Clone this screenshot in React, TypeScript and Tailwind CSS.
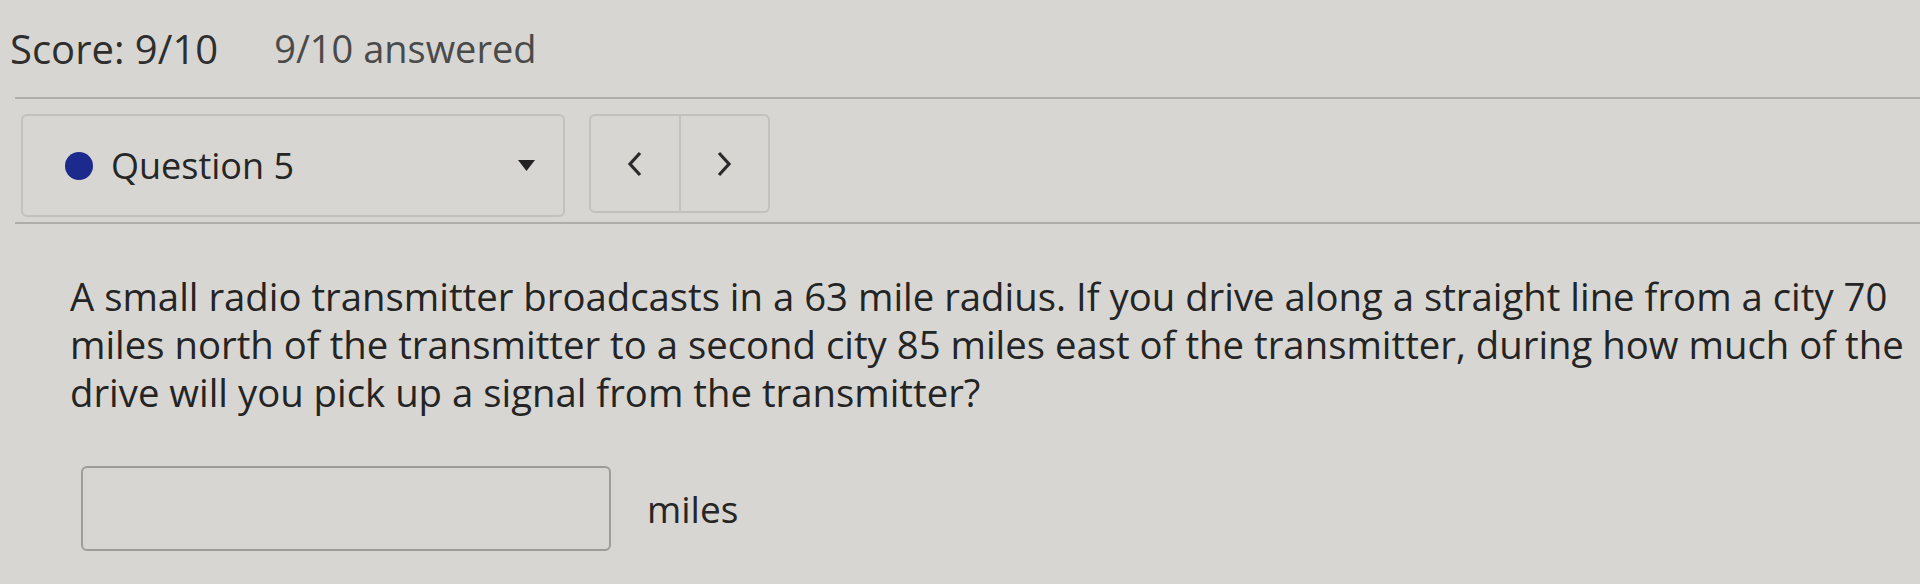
export default function App() {
  return (
    <div className="w-[1920px] h-[584px] overflow-hidden bg-[#d7d6d2] text-[#2b2b2b] font-['Open_Sans',sans-serif]">
      {/* score header */}
      <div className="h-[97px] pl-[10px] flex items-center gap-[56px]">
        <span className="text-[40px] text-[#2e2e2e]">Score: 9/10</span>
        <span className="text-[38px] text-[#4a4a4a]">9/10 answered</span>
      </div>
      <div className="ml-[15px] border-t-2 border-[#aeada9]" />

      {/* question picker row */}
      <div className="pl-[21px] pt-[15px] flex items-start gap-[24px]">
        <div className="w-[544px] h-[103px] rounded-[6px] border-2 border-[#c2c1bd] flex items-center pl-[42px] pr-[28px]">
          <span className="w-[28px] h-[28px] rounded-full bg-[#1b2a8c]" />
          <span className="ml-[18px] text-[36px] text-[#262626]">Question 5</span>
          <svg className="ml-auto" width="17" height="11" viewBox="0 0 17 11">
            <path d="M0 0 L17 0 L8.5 11 Z" fill="#222" />
          </svg>
        </div>
        <div className="w-[181px] h-[99px] rounded-[6px] border-2 border-[#c2c1bd] flex">
          <button className="flex-1 flex items-center justify-center border-r-2 border-[#c2c1bd]">
            <svg width="16" height="26" viewBox="0 0 16 26">
              <path d="M13 2 L3 13 L13 24" fill="none" stroke="#2a2a2a" strokeWidth="3.2" />
            </svg>
          </button>
          <button className="flex-1 flex items-center justify-center">
            <svg width="16" height="26" viewBox="0 0 16 26">
              <path d="M3 2 L13 13 L3 24" fill="none" stroke="#2a2a2a" strokeWidth="3.2" />
            </svg>
          </button>
        </div>
      </div>
      <div className="mt-[5px] ml-[15px] border-t-2 border-[#aeada9]" />

      {/* question text */}
      <p className="mt-[48px] pl-[70px] text-[38.3px] leading-[48px] text-[#242424] whitespace-nowrap">
        A small radio transmitter broadcasts in a 63 mile radius. If you drive along a straight line from a city 70
        <br />
        miles north of the transmitter to a second city 85 miles east of the transmitter, during how much of the
        <br />
        drive will you pick up a signal from the transmitter?
      </p>

      {/* answer */}
      <div className="mt-[50px] pl-[81px] flex items-center gap-[36px]">
        <input
          type="text"
          className="w-[530px] h-[85px] rounded-[6px] border-2 border-[#9d9c98] bg-transparent outline-none"
        />
        <span className="text-[37px] text-[#262626]">miles</span>
      </div>
    </div>
  );
}
